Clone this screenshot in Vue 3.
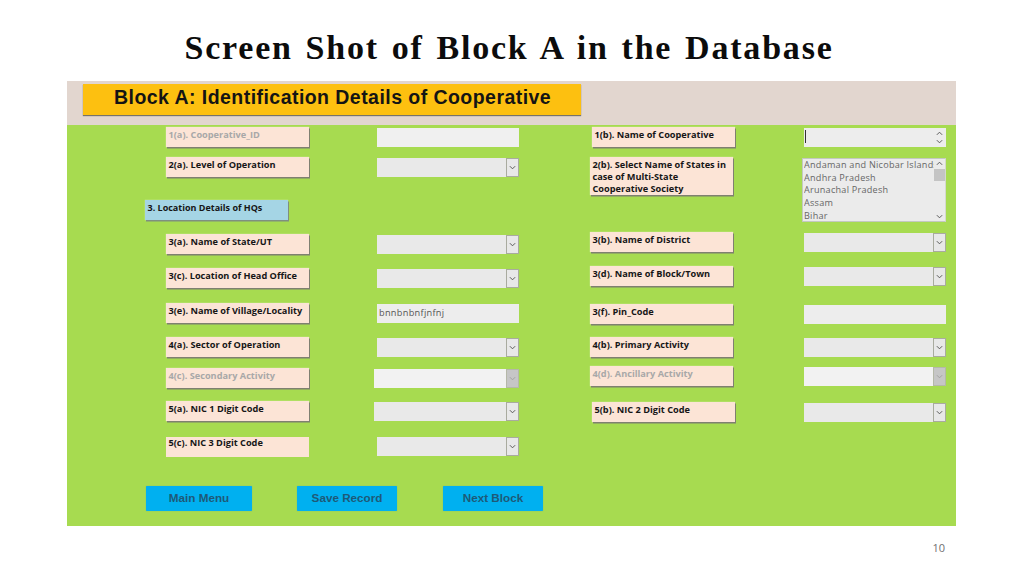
<template>
  <div class="slide">
    <h1>Screen Shot of Block A in the Database</h1>

    <div class="panel">
      <div class="band">
        <div class="block-title">Block A: Identification Details of Cooperative</div>
      </div>

      <div class="body">
        <div class="columns">
          <div v-for="(col, c) in columns" :key="c" class="col" :class="col.cls">
            <template v-for="row in col.rows" :key="row.label">
              <div v-if="row.kind === 'section'" class="section" :style="{ marginTop: row.gap + 'px' }">
                {{ row.label }}
              </div>
              <div v-else class="row" :style="{ marginTop: row.gap + 'px' }">
                <div class="label" :class="{ dim: row.dim, 'label-in': row.labelIn, tall: row.lines, flat: row.flat }">
                  {{ row.label }}
                </div>

                <div v-if="row.kind === 'text'" class="field" :class="{ blank: row.dim }">{{ row.value }}</div>

                <div v-else-if="row.kind === 'memo'" class="field memo">
                  <span class="caret"></span>
                  <div class="spin">
                    <svg viewBox="0 0 8 5" width="7" height="5"><path d="M1 4l3-3 3 3" /></svg>
                    <svg viewBox="0 0 8 5" width="7" height="5"><path d="M1 1l3 3 3-3" /></svg>
                  </div>
                </div>

                <div v-else-if="row.kind === 'list'" class="field list">
                  <div class="options">
                    <div v-for="s in states" :key="s">{{ s }}</div>
                  </div>
                  <div class="spin bar">
                    <svg viewBox="0 0 8 5" width="7" height="5"><path d="M1 4l3-3 3 3" /></svg>
                    <span class="thumb"></span>
                    <svg viewBox="0 0 8 5" width="7" height="5"><path d="M1 1l3 3 3-3" /></svg>
                  </div>
                </div>

                <div v-else class="field select" :class="{ off: row.dim, 'field-out': row.out, 'field-up': row.flat }">
                  <span class="arrow">
                    <svg viewBox="0 0 8 5" width="7" height="5"><path d="M1 1l3 3 3-3" /></svg>
                  </span>
                </div>
              </div>
            </template>
          </div>
        </div>

        <div class="actions">
          <button type="button" class="main">Main Menu</button>
          <button type="button">Save Record</button>
          <button type="button">Next Block</button>
        </div>
      </div>
    </div>

    <div class="page-no">10</div>
  </div>
</template>

<script setup>
const states = ['Andaman and Nicobar Islands', 'Andhra Pradesh', 'Arunachal Pradesh', 'Assam', 'Bihar']

const columns = [
  {
    cls: 'left',
    rows: [
      { label: '1(a). Cooperative_ID', kind: 'text', gap: 0, dim: true, value: '' },
      { label: '2(a). Level of Operation', kind: 'select', gap: 10 },
      { label: '3. Location Details of HQs', kind: 'section', gap: 23 },
      { label: '3(a). Name of State/UT', kind: 'select', gap: 14 },
      { label: '3(c). Location of Head Office', kind: 'select', gap: 14 },
      { label: '3(e). Name of Village/Locality', kind: 'text', gap: 15, value: 'bnnbnbnfjnfnj' },
      { label: '4(a). Sector of Operation', kind: 'select', gap: 14 },
      { label: '4(c). Secondary Activity', kind: 'select', gap: 11, dim: true, out: true },
      { label: '5(a). NIC 1 Digit Code', kind: 'select', gap: 13, out: true },
      { label: '5(c). NIC 3 Digit Code', kind: 'select', gap: 16, flat: true },
    ],
  },
  {
    cls: 'right',
    rows: [
      { label: '1(b). Name of Cooperative', kind: 'memo', gap: 0, labelIn: true },
      { label: '2(b). Select Name of States in case of Multi-State Cooperative Society', kind: 'list', gap: 10, lines: 3 },
      { label: '3(b). Name of District', kind: 'select', gap: 11 },
      { label: '3(d). Name of Block/Town', kind: 'select', gap: 14 },
      { label: '3(f). Pin_Code', kind: 'text', gap: 18, value: '' },
      { label: '4(b). Primary Activity', kind: 'select', gap: 13 },
      { label: '4(d). Ancillary Activity', kind: 'select', gap: 9, dim: true },
      { label: '5(b). NIC 2 Digit Code', kind: 'select', gap: 16, labelIn: true },
    ],
  },
]
</script>

<style scoped>
.slide {
  width: 1024px;
  height: 575px;
  overflow: hidden;
  background: #fff;
  display: flex;
  flex-direction: column;
}

h1 {
  margin: 0;
  height: 81px;
  padding: 30px 6px 0 0;
  box-sizing: border-box;
  text-align: center;
  font-family: "Liberation Serif", serif;
  font-size: 34px;
  line-height: 36px;
  font-weight: 700;
  letter-spacing: 1.8px;
  word-spacing: 2.5px;
  color: #0c0c0c;
}

.panel {
  width: 889px;
  height: 445px;
  margin-left: 67px;
  background: #a7db50;
  flex: none;
}

.band {
  height: 44px;
  background: #e2d6cf;
  padding: 3px 0 0 16px;
  box-sizing: border-box;
}

.block-title {
  width: 498px;
  height: 31px;
  box-sizing: border-box;
  padding-left: 31px;
  background: #fdc010;
  box-shadow: 0 1px 1px #77736a;
  font-family: "Liberation Sans", Arial, sans-serif;
  font-weight: 700;
  font-size: 19.5px;
  letter-spacing: 0.45px;
  line-height: 26px;
  color: #141414;
  white-space: nowrap;
}

.body {
  padding-top: 2px;
}

.columns {
  display: flex;
}

.col {
  display: flex;
  flex-direction: column;
}

.left {
  width: 424px;
  padding-left: 99px;
}

.row {
  display: grid;
  grid-template-columns: 211px 142px;
}

.right .row {
  grid-template-columns: 214px 142px;
}

.label {
  width: 143px;
  height: 20px;
  box-sizing: border-box;
  padding: 2px 2px 0 2.5px;
  background: #fce4d6;
  box-shadow: 1px 1.5px 0 #7f8070, 0 0 1px #dff0c0;
  font-family: "Open Sans", sans-serif;
  font-size: 9.2px;
  font-weight: 700;
  line-height: 12px;
  color: #161616;
}

.label.dim {
  color: #a8a8a8;
}

.label.flat {
  padding-top: 0;
  box-shadow: none;
}

.label.tall {
  height: 38px;
}

.label-in {
  margin-left: 2px;
}

.section {
  width: 143px;
  height: 20px;
  margin-left: -21px;
  box-sizing: border-box;
  padding: 0.5px 3px 0 2.5px;
  background: #a5d5e5;
  box-shadow: 1px 1.5px 0 #7f8f80, 0 0 1px #dff0c0;
  font-family: "Open Sans", sans-serif;
  font-size: 9px;
  font-weight: 700;
  line-height: 13px;
  color: #161616;
}

.field {
  position: relative;
  margin-top: 1px;
  box-sizing: border-box;
  background: #ededed;
  font-family: "Open Sans", sans-serif;
  font-size: 9.2px;
  line-height: 17px;
  letter-spacing: 0.3px;
  color: #555;
  padding-left: 2px;
}

.field.blank {
  background: #f0f0f0;
}

.select {
  display: flex;
  justify-content: flex-end;
  padding: 0;
  background: #e9e9e9;
}

.field-out {
  margin-left: -3px;
}

.field-up {
  margin-top: 0;
  margin-bottom: 1px;
}

.arrow {
  width: 13px;
  box-sizing: border-box;
  border: 1px solid #a9ab9f;
  background: #e8e8e8;
  display: flex;
  align-items: center;
  justify-content: center;
}

.off {
  background: #f2f2f2;
}

.off .arrow {
  background: #c6c6c6;
  border-color: #b5b8a8;
}

.off .arrow path {
  stroke: #a0a0a0;
}

svg path {
  fill: none;
  stroke: #555;
  stroke-width: 1.1;
}

.memo {
  display: flex;
  justify-content: space-between;
}

.caret {
  width: 1px;
  height: 13px;
  margin: 2px 0 0 -1px;
  background: #333;
}

.spin {
  width: 13px;
  display: flex;
  flex-direction: column;
  align-items: center;
  justify-content: space-between;
  padding: 3px 0;
}

.list {
  margin-left: -2px;
  margin-bottom: -1px;
  height: 64px;
  display: flex;
  justify-content: space-between;
  border: 1px solid #c3c9c0;
  border-right-color: #d5d9cf;
  padding-left: 1px;
  background: #ebebeb;
}

.options {
  width: 130px;
  overflow-x: clip;
  white-space: nowrap;
  font-size: 9.1px;
  letter-spacing: 0.25px;
  line-height: 12.7px;
  color: #666;
}

.bar {
  justify-content: flex-start;
  padding: 2px 0;
}

.thumb {
  width: 11px;
  height: 12px;
  margin-top: 3px;
  margin-bottom: auto;
  background: #c4c4c4;
}

.actions {
  display: flex;
  margin: 29px 0 0 79px;
}

button {
  width: 100px;
  height: 25px;
  margin-left: 46px;
  padding: 0 0 2px;
  border: 0;
  border-radius: 1px;
  background: #00b0f0;
  box-shadow: 0 0 1px #55a0a0;
  font-family: "Liberation Sans", Arial, sans-serif;
  font-weight: 700;
  font-size: 11.7px;
  color: #1e5a78;
}

.main {
  width: 106px;
  margin-left: 0;
}

.actions .main + button {
  margin-left: 45px;
}

.page-no {
  padding: 14px 79px 0 0;
  text-align: right;
  font-family: "Open Sans", sans-serif;
  font-size: 11px;
  line-height: 15px;
  color: #6f6f6f;
}
</style>

<style>
html,
body {
  margin: 0;
  background: #fff;
}
</style>
